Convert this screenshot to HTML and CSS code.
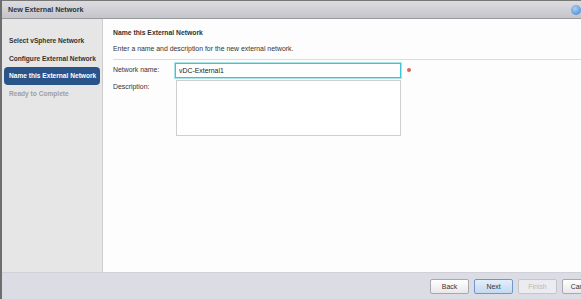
FILE: index.html
```html
<!DOCTYPE html>
<html lang="en">
<head>
    <meta charset="UTF-8">
    <title>New External Network</title>
    <link rel="stylesheet" href="styles.css">
</head>
<body>
    <div class="dialog">
        <div class="titlebar">
            <span class="title">New External Network</span>
            <span class="close"></span>
        </div>

        <div class="main">
            <!-- Steps -->
            <ul class="steps">
                <li class="step">Select vSphere Network</li>
                <li class="step">Configure External Network</li>
                <li class="step active">Name this External Network</li>
                <li class="step disabled">Ready to Complete</li>
            </ul>

            <!-- Page -->
            <div class="page">
                <h2 class="page-title">Name this External Network</h2>
                <p class="page-desc">Enter a name and description for the new external network.</p>
                <div class="form">
                    <div class="row">
                        <label class="label">Network name:</label>
                        <input class="field name-field" type="text" value="vDC-External1">
                        <span class="required"></span>
                    </div>
                    <div class="row">
                        <label class="label">Description:</label>
                        <textarea class="field desc-field"></textarea>
                    </div>
                </div>
            </div>
        </div>

        <div class="footer">
            <button class="btn">Back</button>
            <button class="btn primary">Next</button>
            <button class="btn" disabled>Finish</button>
            <button class="btn">Cancel</button>
        </div>
    </div>
</body>
</html>
```

FILE: styles.css
```css
body {
    margin: 0;
    overflow: hidden;
    font-family: "Liberation Sans", Arial, sans-serif;
    font-size: 6.9px;
    color: #333;
    background: #fff;
}

.dialog {
    width: 610px;
    height: 299px;
    display: flex;
    flex-direction: column;
    border-left: 2px solid #6e6e6e;
}

.titlebar {
    height: 17px;
    display: flex;
    align-items: center;
    justify-content: space-between;
    padding: 0 6px;
    background: linear-gradient(#dcdce0, #c4c4cc);
    border-top: 1px solid #777;
    border-bottom: 1px solid #999;
}

.title {
    font-weight: bold;
    font-size: 7.2px;
    color: #333;
}

.close {
    width: 10px;
    height: 10px;
    margin-right: 25px;
    border-radius: 50%;
    background: radial-gradient(circle at 40% 35%, #a9d0f5, #3b7fd0);
}

.main {
    flex: 1;
    display: flex;
}

.steps {
    width: 100px;
    margin: 0;
    padding: 13px 0 0;
    list-style: none;
    background: #e6e6e6;
    border-right: 1px solid #cdcdcd;
}

.step {
    margin: 0 2px;
    padding: 4px 5px;
    height: 9.5px;
    line-height: 9.5px;
    font-size: 6.6px;
    font-weight: bold;
    color: #333;
    white-space: nowrap;
}

.step.active {
    background: #28548a;
    color: #fff;
    border-radius: 4px;
}

.step.disabled {
    color: #a0a0a0;
}

.page {
    flex: 1;
    padding: 7px 0 0 10px;
    background: #fdfdfd;
}

.page-title {
    margin: 0;
    font-size: 6.8px;
    font-weight: bold;
    line-height: 14px;
}

.page-desc {
    margin: 2px 0 0;
    line-height: 13px;
    padding-bottom: 4px;
    border-bottom: 1px solid #dcdcdc;
}

.form {
    padding-top: 3px;
}

.row {
    display: flex;
    align-items: flex-start;
    margin-bottom: 2px;
}

.label {
    width: 62px;
    line-height: 14px;
}

.field {
    box-sizing: border-box;
    font-family: inherit;
    font-size: 6.9px;
    color: #222;
    background: #fff;
    outline: none;
    margin: 0;
}

.name-field {
    width: 226px;
    height: 15px;
    padding: 0 3px;
    border: 1px solid #41c4cf;
    box-shadow: 0 0 0 1px #a9e4e9;
}

.required {
    width: 4px;
    height: 4px;
    margin: 5px 0 0 6px;
    border-radius: 50%;
    background: #e06060;
}

.desc-field {
    width: 225px;
    height: 56px;
    margin-left: 1px;
    border: 1px solid #cfcfcf;
    resize: none;
}

.footer {
    height: 26px;
    display: flex;
    align-items: center;
    justify-content: flex-end;
    gap: 5px;
    padding-right: 11px;
    background: #dcdce4;
    border-top: 1px solid #d0d0d8;
}

.btn {
    width: 39px;
    height: 15px;
    padding: 0;
    font-family: inherit;
    font-size: 6.9px;
    color: #333;
    background: linear-gradient(#ffffff, #e8e8ec);
    border: 1px solid #a8a8b0;
    border-radius: 2px;
}

.btn.primary {
    background: linear-gradient(#e3eefa, #c4d9f1);
    border-color: #6f98c8;
}

.btn:disabled {
    color: #b8b8b8;
    background: #ececf0;
    border-color: #c4c4cc;
}
```
